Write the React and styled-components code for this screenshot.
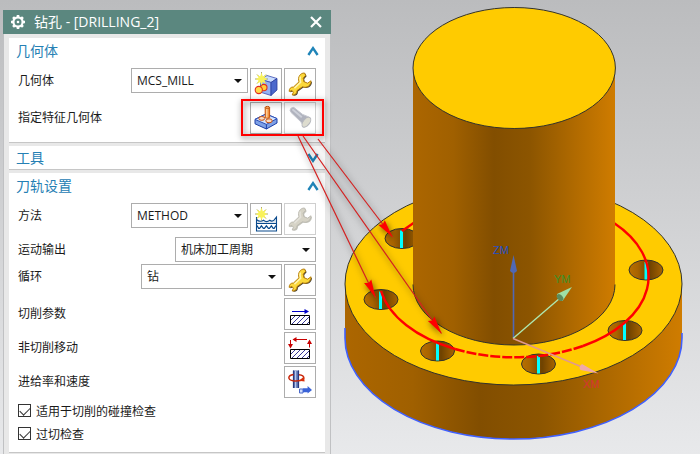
import React, { useState } from "react";
import styled, { createGlobalStyle } from "styled-components";

const GlobalStyle = createGlobalStyle`
  * {
    box-sizing: border-box;
  }

  body {
    margin: 0;
    font-family: "Open Sans", "Noto Sans CJK SC", sans-serif;
    font-size: 12px;
    color: #1a1a1a;
  }
`;

const GearIcon = () => (
  <svg width="16" height="16" viewBox="0 0 16 16" fill="none" stroke="#fff">
    <circle cx="8" cy="8" r="4.6" strokeWidth="2.2" />
    <circle cx="8" cy="8" r="1.3" fill="#fff" stroke="none" />
    {[0, 45, 90, 135, 180, 225, 270, 315].map((angle) => (
      <path
        key={angle}
        d="M8 3V1"
        strokeWidth="2.6"
        transform={`rotate(${angle} 8 8)`}
      />
    ))}
  </svg>
);

const CloseIcon = () => (
  <svg width="12" height="12" viewBox="0 0 12 12">
    <path d="M1 1L11 11M11 1L1 11" stroke="#fff" strokeWidth="2.2" />
  </svg>
);

const Chevron = ({ open }) => (
  <svg width="12" height="10" viewBox="0 0 12 10" fill="none">
    <path
      d={open ? "M1.4 9L6 2.2L10.6 9" : "M1.4 1L6 7.8L10.6 1"}
      stroke="#1f84b8"
      strokeWidth="2.4"
    />
  </svg>
);

const Star = ({ x, y }) => (
  <g transform={`translate(${x} ${y})`}>
    <path d="M0 -7V6.5M-6.5 0H6.5M-4.5 -4.5L4.5 4.5M4.5 -4.5L-4.5 4.5" stroke="#8a8a52" strokeWidth="0.8" />
    <path
      d="M0 -6.5L1.4 -2.6L4.8 -4.6L3 -1.2L6 0L3 1.4L4.6 4.8L1.3 3L0 6.2L-1.3 3L-4.6 4.8L-3 1.4L-6 0L-3 -1.2L-4.8 -4.6L-1.4 -2.6Z"
      fill="#f9f25a"
    />
  </g>
);

const IconBox = ({ children }) => (
  <svg width="30" height="30" viewBox="1 1 30 30" fill="none" aria-hidden="true">
    {children}
  </svg>
);

const GeometryIcon = () => (
  <IconBox>
    <path d="M11 11.5L17 7.5L27 10.5L21 14.5Z" fill="#c9dcff" stroke="#3a4cae" strokeWidth="0.8" />
    <path d="M11 11.5L21 14.5V27.5L10 24Z" fill="#93b0f4" stroke="#3a4cae" strokeWidth="0.8" />
    <path d="M21 14.5L27 10.5V22L21 27.5Z" fill="#4b68cc" stroke="#2b3c9c" strokeWidth="0.8" />
    <circle cx="13.8" cy="19.6" r="3.2" fill="#ffce3a" stroke="#e0301c" strokeWidth="1.1" />
    <circle cx="8.8" cy="22" r="3.6" fill="#ffdc4a" stroke="#e0301c" strokeWidth="1.1" />
    <Star x={11.5} y={11} />
  </IconBox>
);

const wrenchPath =
  "M20.5 5C16 5 13.6 9 15 13.8L9.5 19C6.8 18.8 5 20.8 5.2 23.4L8 22.6L9.4 24.2L8.2 27C11.2 27.4 13.2 25.4 13 22.6L18.4 18.8C23 20.4 27 17.6 27 12.8L23.6 15.2L19.8 13.6L19.2 10.2L21.6 7.4Z";

const WrenchIcon = ({ muted }) => (
  <IconBox>
    <path
      d={wrenchPath}
      fill={muted ? "#c4c4bc" : "#4a4230"}
      transform="translate(1 0.8)"
    />
    <path
      d={wrenchPath}
      fill={muted ? "#d6d3c6" : "#fbd83a"}
      stroke={muted ? "#bdbbb2" : "#b87e08"}
      strokeLinejoin="round"
    />
    <path
      d="M16.4 8.5C15.6 10.5 16 12.5 16.6 14.2L10.4 20.2"
      stroke={muted ? "#e4e2da" : "#fff6b0"}
      strokeWidth="1.6"
    />
  </IconBox>
);

const FeatureIcon = () => (
  <IconBox>
    <path
      d="M5 17.4L16 12L27 16.6V21L16.4 27L5 21.8Z"
      fill="#7da0e6"
      stroke="#1c3ea6"
      strokeLinejoin="round"
    />
    <path d="M5 17.4L16 12L27 16.6L16.4 22.4Z" fill="#d3e4ff" stroke="#2a4db8" />
    <path d="M16.4 22.4V27" stroke="#1c3ea6" />
    <ellipse cx="11.8" cy="16.4" rx="3" ry="1.9" fill="#f8dcc4" stroke="#c8500e" />
    <ellipse cx="19" cy="18.8" rx="3.2" ry="2" fill="#f8dcc4" stroke="#c8500e" />
    <path d="M15.2 5.5V15.6Q17.4 17 19.6 15.6V5.5Z" fill="#f3913e" stroke="#c8560e" />
    <path d="M16.8 6V15.6" stroke="#ffd9a8" strokeWidth="1.3" />
    <ellipse cx="17.4" cy="5.4" rx="2.2" ry="1" fill="#ffb36a" stroke="#c8560e" />
  </IconBox>
);

const FlashlightIcon = () => (
  <IconBox>
    <path
      d="M6 8.2Q6.4 5.4 9.8 5.4L18.6 12.4L25.4 15.2Q28 20 20.4 25L16.6 19.6L7 10.4Z"
      fill="#b0b3be"
      stroke="#c6c8d0"
    />
    <path d="M8.4 7.2L17.8 15.2" stroke="#cdd0d9" strokeWidth="2" />
    <ellipse
      cx="22.4"
      cy="20.2"
      rx="3.2"
      ry="5.8"
      fill="#dddccf"
      stroke="#b4b6bc"
      transform="rotate(38 22.4 20.2)"
    />
  </IconBox>
);

const MethodIcon = () => (
  <IconBox>
    <path
      d="M6.5 16.5Q10 19.5 13.5 17.2Q16.5 20 19.8 17.6Q22 20 26.5 14.5V20.5H6.5Z"
      fill="#dfe6ee"
    />
    <path
      d="M6.5 14V28H26.5V14L24 17.2Q22 19 19.8 17.2Q16.5 20 13.5 17.2Q10 19.5 6.5 16.5M6.5 20.5H26.5"
      stroke="#0a4a8c"
      strokeWidth="1.1"
    />
    <path
      d="M7 22.5L8.6 25.4H9.6L11.4 22.8L13.4 25.4H14.4L16.4 22.8L18.4 25.4H19.4L21.4 22.8L23.2 25.4H24.2L26 22.5"
      stroke="#0a4a8c"
      strokeWidth="1.2"
    />
    <Star x={11.5} y={11} />
  </IconBox>
);

const HatchBlock = () => (
  <g>
    <path
      d="M7 22L11.5 17.5M7.5 26.5L16 18M12.5 26.5L21 18M17.5 26.5L25.5 18.5M22.5 26.5L25.5 23.5"
      stroke="#23238c"
      strokeWidth="0.9"
    />
    <path d="M6.5 17.5H25.5V26.5H6.5Z" stroke="#000" />
  </g>
);

const CuttingIcon = () => (
  <IconBox>
    <path d="M8 13.5H22" stroke="#0000c8" />
    <path d="M20.5 11V16L25 13.5Z" fill="#0000c8" />
    <HatchBlock />
  </IconBox>
);

const NonCuttingIcon = () => (
  <IconBox>
    <path d="M11 7.5H23M6.5 8V13M25.5 10.5V15.5" stroke="#c80000" />
    <path d="M12.5 5V10L8.5 7.5ZM4 12H9L6.5 16.5ZM23 12H28L25.5 7.5Z" fill="#c80000" />
    <HatchBlock />
  </IconBox>
);

const FeedIcon = () => (
  <IconBox>
    <path d="M9 4.5H15V22H9Z" fill="#5c74b4" />
    <path d="M9.5 4.5V22M14.5 4.5V22" stroke="#29387c" strokeWidth="1.2" />
    <path d="M11.6 5V22" stroke="#b8c8ec" strokeWidth="1.3" />
    <path
      d="M9.5 8.6C3.4 9.6 3.4 13.6 9 14.8C14 15.6 19.8 14.4 19.8 12C19.8 10 17.6 9 15 8.8"
      stroke="#c8280c"
      strokeWidth="1.5"
    />
    <path d="M15 14.8L20 10.5L20.6 15.6Z" fill="#d8300c" />
    <path d="M15.5 23H19V27H15.5Z" fill="#cddcff" stroke="#4a68c8" />
    <path d="M19 22.2H23.6V20L28 24L23.6 27.6V26.2H19Z" fill="#3a63d8" />
  </IconBox>
);

const IconButton = ({ label, muted, children }) => (
  <ToolButton type="button" aria-label={label} disabled={muted}>
    {children}
  </ToolButton>
);

const Dropdown = ({ id, value, width }) => (
  <SelectWrapper $width={width}>
    <Select id={id} defaultValue={value}>
      <option>{value}</option>
    </Select>
  </SelectWrapper>
);

const Group = ({ title, open, children }) => (
  <Section>
    <SectionHeader type="button" aria-expanded={!!open} $open={open}>
      {title}
      <Chevron open={open} />
    </SectionHeader>
    {open && <SectionBody>{children}</SectionBody>}
  </Section>
);

const Check = ({ label }) => {
  const [checked, setChecked] = useState(true);

  return (
    <CheckLabel>
      <Checkbox
        type="checkbox"
        checked={checked}
        onChange={() => setChecked(!checked)}
      />
      {label}
    </CheckLabel>
  );
};

const holes = [
  { x: 402, y: 238.5, pin: 401.5 },
  { x: 381, y: 299.5, pin: 380.5 },
  { x: 437.5, y: 351, pin: 437.5 },
  { x: 538.5, y: 364, pin: 538.5 },
  { x: 625, y: 330.5, pin: 624.5 },
  { x: 646, y: 270, pin: 646 },
];

const Model = () => (
  <ModelSvg
    viewBox="331 0 369 454"
    preserveAspectRatio="xMidYMin meet"
    role="img"
    aria-label="DRILLING_2"
  >
    <defs>
      <linearGradient id="side">
        <stop offset="0" stopColor="#ac6600" />
        <stop offset="0.2" stopColor="#a06000" />
        <stop offset="0.4" stopColor="#824e00" />
        <stop offset="0.58" stopColor="#8c5500" />
        <stop offset="0.8" stopColor="#b06a00" />
        <stop offset="1" stopColor="#cf7c00" />
      </linearGradient>
      <linearGradient id="bore">
        <stop offset="0" stopColor="#b87000" />
        <stop offset="0.25" stopColor="#a86400" />
        <stop offset="0.6" stopColor="#6e4200" />
        <stop offset="1" stopColor="#a86400" />
      </linearGradient>
    </defs>

    {/* flange */}
    <path
      d="M345 284V338A168.5 101 0 0 0 682 338V284Z"
      fill="url(#side)"
    />
    <path
      d="M345 328V338A168.5 101 0 0 0 682 338V333"
      fill="none"
      stroke="#4060ff"
      strokeWidth="1.6"
    />
    <ellipse cx="513.5" cy="284" rx="168.5" ry="101" fill="#ffcb00" stroke="#33332c" />

    {holes.map(({ x, y, pin }) => (
      <g key={x}>
        <ellipse cx={x} cy={y} rx="17" ry="10" fill="url(#bore)" stroke="#33332c" />
        <path d={`M${pin} ${y - 8}V${y + 9.5}`} stroke="#00ffff" strokeWidth="3" />
      </g>
    ))}

    {/* tool path, hidden behind the boss at the back */}
    <path
      d="M381 291A134.5 80.5 0 0 0 455 349"
      fill="none"
      stroke="#ff0000"
      strokeWidth="2.4"
    />
    <path
      d="M455 349A134.5 80.5 0 0 0 583 346"
      fill="none"
      stroke="#ff0000"
      strokeWidth="2.6"
      strokeDasharray="10 2"
    />
    <path
      d="M583 346A134.5 80.5 0 0 0 614 223M402 231L415 222"
      fill="none"
      stroke="#ff0000"
      strokeWidth="2.4"
    />

    {/* boss */}
    <path d="M413 68V284.5A101 60.5 0 0 0 615 284.5V68Z" fill="url(#side)" />
    <path
      d="M413 284.5A101 60.5 0 0 0 615 284.5"
      fill="none"
      stroke="#33332c"
    />
    <ellipse cx="514.2" cy="68" rx="101.2" ry="60.5" fill="#ffcb00" stroke="#33332c" />

    {/* coordinate axes */}
    <path d="M513.5 338V272" stroke="#5068b4" strokeWidth="1.6" />
    <path d="M513.5 255L510 271Q513.5 275 517 271Z" fill="#5068b4" />
    <path d="M513 338.5L560 298" stroke="#aee8b0" strokeWidth="1.4" />
    <path d="M572 287L557 294Q557 300 562.5 301Z" fill="#9fe0a4" />
    <ellipse cx="560" cy="297.5" rx="2.6" ry="4" fill="#5c8c5c" transform="rotate(-42 560 297.5)" />
    <path d="M513 338.5L582 367" stroke="#e09890" strokeWidth="1.4" />
    <path d="M598.5 373.5L582 364Q578 367 580.5 370Z" fill="#f0aaa8" />
    <AxisLabel x="493" y="254" fill="#2450c8">ZM</AxisLabel>
    <AxisLabel x="554" y="283" fill="#3c9028">YM</AxisLabel>
    <AxisLabel x="583" y="388" fill="#d83434">XM</AxisLabel>
  </ModelSvg>
);

const callouts = [
  { from: [318, 139], to: [392.5, 237] },
  { from: [303, 136], to: [441.5, 333.5] },
  { from: [298, 136], to: [375.5, 297.5] },
];

const Annotation = () => (
  <AnnotationSvg width="700" height="454" viewBox="0 0 700 454" fill="none">
    <rect x="242" y="100" width="81" height="35" stroke="#f00" strokeWidth="2" />
    {callouts.map(({ from, to }) => {
      const angle =
        (Math.atan2(to[1] - from[1], to[0] - from[0]) * 180) / Math.PI;
      return (
        <g key={to[0]}>
          <path d={`M${from}L${to}`} stroke="#d42020" strokeWidth="1.2" />
          <path
            d="M0 0L-18 -4L-16 0L-18 4Z"
            fill="#f00"
            transform={`translate(${to}) rotate(${angle})`}
          />
        </g>
      );
    })}
  </AnnotationSvg>
);

const App = () => {
  return (
    <Page>
      <GlobalStyle />
      <Panel>
        <TitleBar>
          <GearIcon />
          <Title>钻孔 - [DRILLING_2]</Title>
          <CloseButton type="button" aria-label="关闭">
            <CloseIcon />
          </CloseButton>
        </TitleBar>
        <PanelBody>
          <Group title="几何体" open>
            <Row>
              <Label htmlFor="geometry">几何体</Label>
              <Dropdown id="geometry" value="MCS_MILL" width={117} />
              <IconButton label="新建几何体">
                <GeometryIcon />
              </IconButton>
              <IconButton label="编辑几何体">
                <WrenchIcon />
              </IconButton>
            </Row>
            <Row>
              <Label as="span" $tall>指定特征几何体</Label>
              <IconButton label="指定特征几何体">
                <FeatureIcon />
              </IconButton>
              <IconButton label="显示" muted>
                <FlashlightIcon />
              </IconButton>
            </Row>
          </Group>

          <Group title="工具" />

          <Group title="刀轨设置" open>
            <Row>
              <Label htmlFor="method">方法</Label>
              <Dropdown id="method" value="METHOD" width={117} />
              <IconButton label="新建方法">
                <MethodIcon />
              </IconButton>
              <IconButton label="编辑方法" muted>
                <WrenchIcon muted />
              </IconButton>
            </Row>
            <Row>
              <Label htmlFor="output">运动输出</Label>
              <Dropdown id="output" value="机床加工周期" width={141} />
            </Row>
            <Row>
              <Label htmlFor="cycle">循环</Label>
              <Dropdown id="cycle" value="钻" width={141} />
              <IconButton label="编辑循环">
                <WrenchIcon />
              </IconButton>
            </Row>
            <Row>
              <Label as="span" $tall>切削参数</Label>
              <IconButton label="切削参数">
                <CuttingIcon />
              </IconButton>
            </Row>
            <Row>
              <Label as="span" $tall>非切削移动</Label>
              <IconButton label="非切削移动">
                <NonCuttingIcon />
              </IconButton>
            </Row>
            <Row>
              <Label as="span" $tall>进给率和速度</Label>
              <IconButton label="进给率和速度">
                <FeedIcon />
              </IconButton>
            </Row>
            <Checks>
              <Check label="适用于切削的碰撞检查" />
              <Check label="过切检查" />
            </Checks>
          </Group>
        </PanelBody>
      </Panel>
      <Viewport>
        <Model />
      </Viewport>
      <Annotation />
    </Page>
  );
};

const Page = styled.div`
  position: relative;
  display: flex;
  min-height: 100vh;
  padding-left: 3px;
  overflow: hidden;
  background: linear-gradient(#bbbcbe, #e8e9eb);
`;

const Panel = styled.form`
  display: flex;
  flex-direction: column;
  flex: 0 0 328px;
  padding-top: 10px;
`;

const TitleBar = styled.header`
  display: flex;
  align-items: center;
  height: 24px;
  padding: 0 9px 0 7px;
  background: #5b877f;
  color: #fff;
`;

const Title = styled.h1`
  flex: 1;
  margin: 0 0 0 8px;
  font-size: 14px;
  font-weight: 400;
  line-height: 24px;
`;

const CloseButton = styled.button`
  display: flex;
  padding: 0;
  border: 0;
  background: none;
`;

const PanelBody = styled.div`
  display: flex;
  flex: 1;
  flex-direction: column;
  gap: 3px;
  padding: 4px 5px 0;
  border: 1px solid #c0c1c3;
  border-width: 0 1px;
  background: #e8e8e8;
`;

const Section = styled.section`
  border-bottom: 1px solid #c6c6c6;
  background: #fff;
`;

const SectionHeader = styled.button`
  display: flex;
  align-items: center;
  justify-content: space-between;
  width: 100%;
  height: ${({ $open }) => ($open ? "26px" : "23px")};
  padding: 0 6px 0 7px;
  border: 0;
  background: none;
  color: #2680b4;
  font: inherit;
  font-size: 14px;
  line-height: 20px;
`;

const SectionBody = styled.div`
  display: flex;
  flex-direction: column;
  gap: 2px;
  padding: 4px 9px 8px;
`;

const Row = styled.div`
  display: flex;
  align-items: flex-start;
  gap: 2px;
`;

const Label = styled.label`
  flex: 1;
  line-height: ${({ $tall }) => ($tall ? "32px" : "25px")};
`;

const SelectWrapper = styled.div`
  position: relative;
  width: ${({ $width }) => $width}px;

  &::after {
    content: "";
    position: absolute;
    top: 11px;
    right: 6px;
    border: 4px solid transparent;
    border-top-color: #111;
    border-bottom: 0;
    pointer-events: none;
  }
`;

const Select = styled.select`
  display: block;
  width: 100%;
  height: 25px;
  padding: 0 18px 0 5px;
  appearance: none;
  border: 1px solid #adadad;
  border-radius: 0;
  background: #fff;
  color: #1a1a1a;
  font: inherit;
`;

const ToolButton = styled.button`
  display: flex;
  width: 32px;
  height: 32px;
  padding: 0;
  border: 1px solid ${({ disabled }) => (disabled ? "#cfcfcf" : "#adadad")};
  background: #fff;
`;

const Checks = styled.div`
  display: flex;
  flex-direction: column;
  margin: -1px 0;
`;

const CheckLabel = styled.label`
  display: flex;
  align-items: center;
  gap: 5px;
  height: 23px;
`;

const Checkbox = styled.input`
  display: flex;
  justify-content: center;
  width: 13px;
  height: 13px;
  margin: 0;
  appearance: none;
  border: 1px solid #333;
  background: #fff;

  &:checked::after {
    content: "";
    width: 5px;
    height: 9px;
    border: solid #333;
    border-width: 0 1px 1px 0;
    transform: rotate(45deg);
  }
`;

const Viewport = styled.main`
  flex: 1;
  min-width: 0;
`;

const ModelSvg = styled.svg`
  display: block;
  width: 100%;
  height: 100vh;
`;

const AxisLabel = styled.text`
  font-family: "Liberation Sans", Arial, sans-serif;
  font-size: 11px;
`;

const AnnotationSvg = styled.svg`
  position: absolute;
  top: 0;
  left: 0;
  pointer-events: none;
  filter: drop-shadow(1px 2px 3px rgba(0, 0, 0, 0.6));
`;

export default App;
